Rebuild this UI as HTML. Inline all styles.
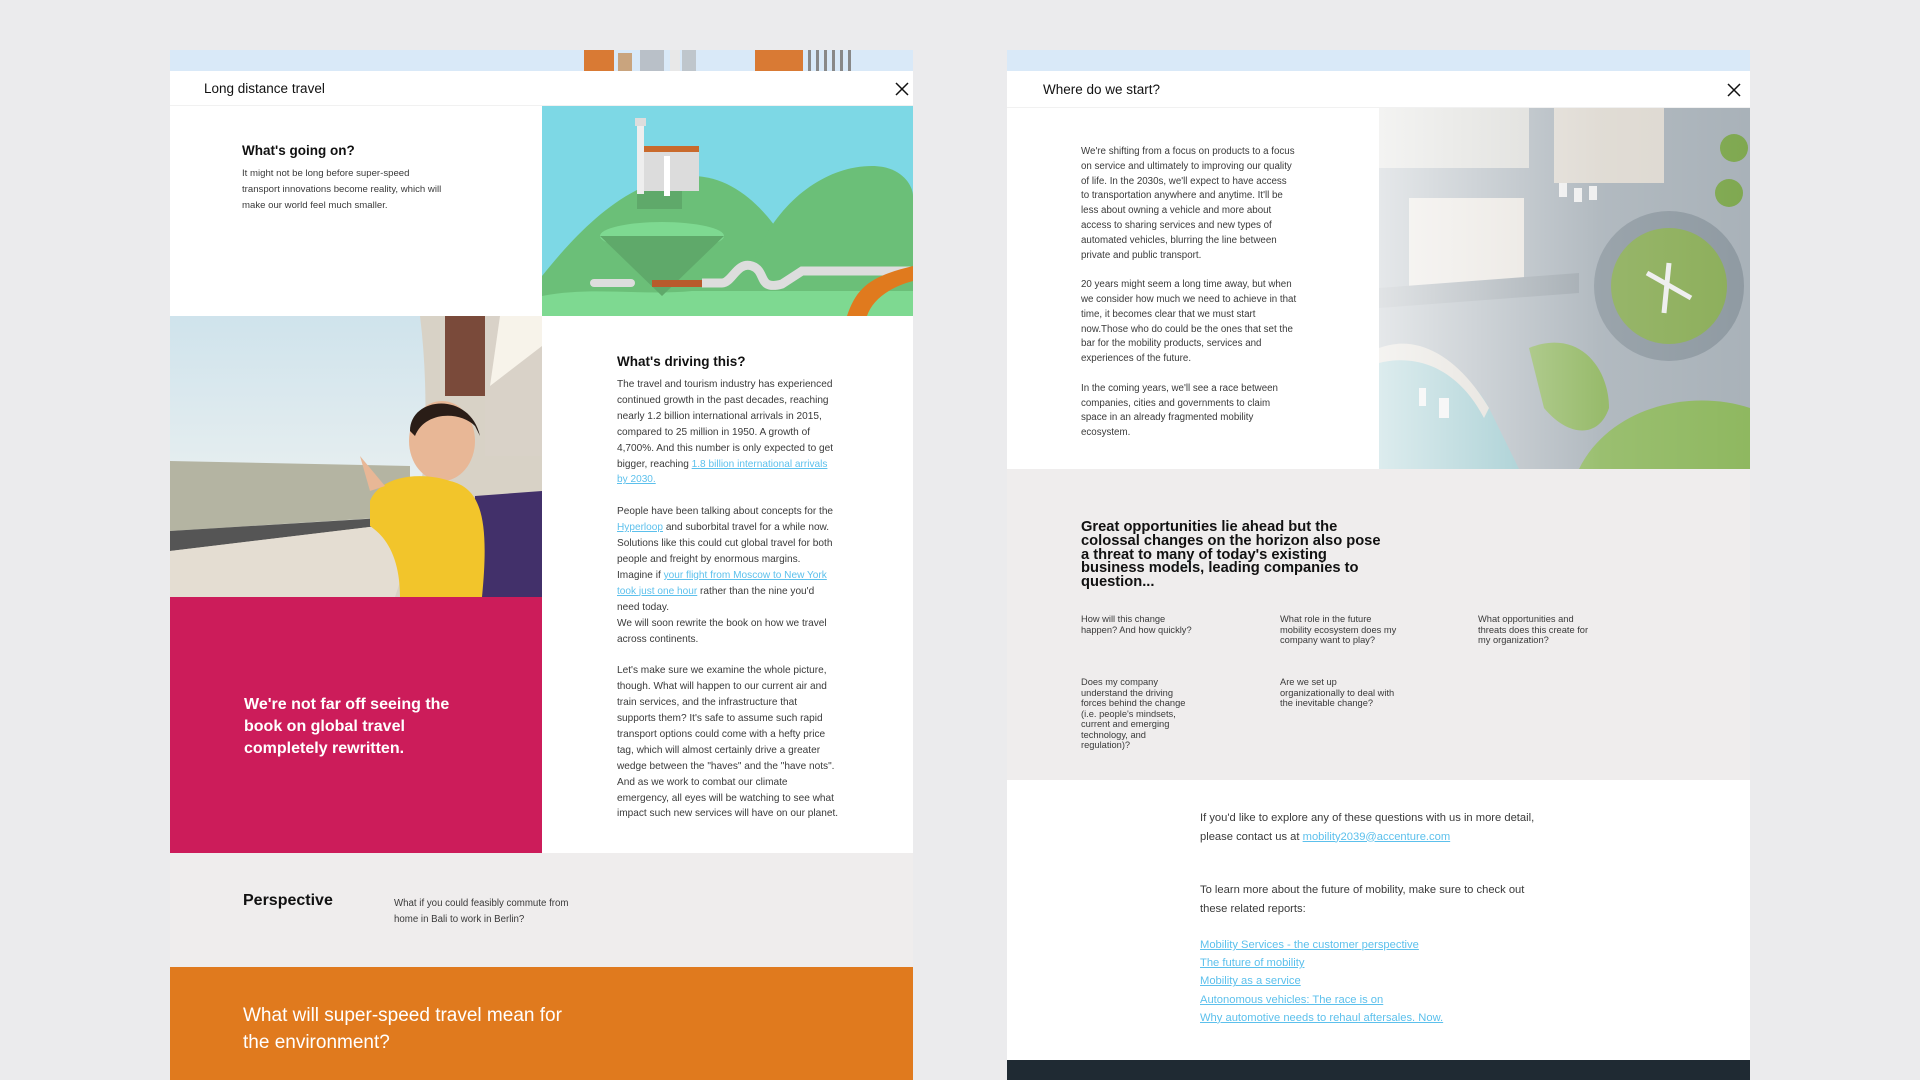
<!DOCTYPE html>
<html><head><meta charset="utf-8"><style>
*{margin:0;padding:0;box-sizing:border-box}
body{width:1920px;height:1080px;background:#ebebed;position:relative;overflow:hidden;font-family:"Liberation Sans",sans-serif;color:#333}
.a{position:absolute}
.t{font-size:10px;line-height:16px;color:#3a3a3a;white-space:nowrap}
a{color:#5cc0ec;text-decoration:underline}
</style></head><body>

<!-- LEFT PANEL -->
<div class="a" style="left:170px;top:50px;width:743px;height:21px;background:#d9e9f8"></div>
<svg class="a" style="left:570px;top:50px" width="312" height="21">
<rect x="14" y="0" width="30" height="21" fill="#d97a34"/><rect x="48" y="3" width="14" height="18" fill="#c9a47e"/>
<rect x="70" y="0" width="24" height="21" fill="#b9c0c8"/><rect x="100" y="0" width="10" height="21" fill="#e8e8e8"/>
<rect x="112" y="0" width="14" height="21" fill="#bfc6cc"/><rect x="185" y="0" width="48" height="21" fill="#d97a34"/>
<g fill="#888"><rect x="238" y="0" width="3" height="21"/><rect x="246" y="0" width="3" height="21"/><rect x="254" y="0" width="3" height="21"/><rect x="262" y="0" width="3" height="21"/><rect x="270" y="0" width="3" height="21"/><rect x="278" y="0" width="3" height="21"/></g>
</svg>
<div class="a" style="left:170px;top:71px;width:743px;height:35px;background:#fff;border-bottom:1px solid #f1f1f1"></div>
<div class="a" style="left:204px;top:81px;font-size:13.5px;color:#111">Long distance travel</div>
<svg class="a" style="left:895px;top:82px" width="14" height="14"><path d="M1 1L13 13M13 1L1 13" stroke="#111" stroke-width="1.5"/></svg>

<div class="a" style="left:170px;top:106px;width:372px;height:210px;background:#fff"></div>
<div class="a" style="left:242px;top:143px;font-size:13.5px;color:#111;font-weight:bold">What's going on?</div>
<div class="a t" style="left:242px;top:166px;font-size:9.6px;line-height:16px">It might not be long before super-speed<br>transport innovations become reality, which will<br>make our world feel much smaller.</div>

<svg class="a" style="left:542px;top:106px" width="371" height="210">
<rect width="371" height="210" fill="#7dd8e5"/>
<path d="M0 170 C40 120 90 70 150 70 C190 70 220 100 240 130 L240 210 L0 210Z" fill="#6bbf78"/>
<path d="M210 160 C230 100 280 60 330 60 C360 60 371 80 371 90 L371 210 L210 210Z" fill="#6bbf78"/>
<path d="M0 210 L0 190 C50 180 100 190 150 185 L371 185 L371 210Z" fill="#7ed991"/>
<rect x="95" y="83" width="45" height="20" fill="#5fa96a"/>
<ellipse cx="120" cy="130" rx="62" ry="14" fill="#7ed991"/>
<path d="M58 130 L120 190 L182 130Z" fill="#5fa96a"/>
<rect x="102" y="40" width="55" height="45" fill="#dcdcdc"/><rect x="102" y="40" width="55" height="6" fill="#c96a2c"/>
<rect x="95" y="18" width="7" height="70" fill="#eee"/><rect x="93" y="12" width="11" height="8" fill="#ddd"/>
<rect x="122" y="50" width="6" height="40" fill="#fff"/>
<rect x="48" y="173" width="45" height="8" rx="4" fill="#ddd"/><rect x="110" y="174" width="50" height="7" fill="#b85a2c"/>
<path d="M160 177 L180 177 C190 177 195 155 210 160 C225 165 215 185 240 178 L260 165 L371 165" stroke="#ddd" stroke-width="9" fill="none"/>
<path d="M305 210 C315 180 330 170 371 160 L371 175 C345 182 330 195 325 210Z" fill="#e07a1e"/>
</svg>

<svg class="a" style="left:170px;top:316px" width="372" height="281">
<defs><linearGradient id="sky" x1="0" y1="0" x2="0" y2="1"><stop offset="0" stop-color="#cfe3ec"/><stop offset="1" stop-color="#eef2f1"/></linearGradient></defs>
<rect width="372" height="281" fill="#d8d2c6"/>
<path d="M0 0 L250 0 C260 80 255 170 245 200 L0 215Z" fill="url(#sky)"/>
<path d="M0 145 L240 150 L240 200 L0 215Z" fill="#b4b4a2"/>
<path d="M0 215 L245 200 L250 205 L0 235Z" fill="#555"/>
<path d="M0 235 L250 205 L225 281 L0 281Z" fill="#e4ddd2"/>
<rect x="275" y="0" width="40" height="80" fill="#7a4a3a"/>
<rect x="315" y="0" width="57" height="140" fill="#d9d2c8"/>
<path d="M330 0 L372 0 L372 30 L320 70Z" fill="#f7f3ea"/>
<path d="M305 180 L372 175 L372 281 L300 281Z" fill="#42306a"/>
<ellipse cx="272" cy="125" rx="33" ry="40" fill="#e8b796"/>
<path d="M240 115 C240 80 300 75 310 120 L305 110 C290 95 255 95 245 120Z" fill="#2a1d17"/>
<path d="M200 185 C210 160 250 155 280 165 C310 172 320 200 312 281 L230 281 C230 240 215 220 200 210Z" fill="#f2c52b"/>
<path d="M190 140 L200 175 L215 170Z" fill="#e8b796"/>
</svg>

<div class="a" style="left:170px;top:597px;width:372px;height:256px;background:#cc1c5a"></div>
<div class="a" style="left:244px;top:694px;font-size:16px;line-height:22px;color:#fff;font-weight:bold;white-space:nowrap">We're not far off seeing the<br>book on global travel<br>completely rewritten.</div>

<div class="a" style="left:542px;top:316px;width:371px;height:537px;background:#fff"></div>
<div class="a" style="left:617px;top:354px;font-size:13.5px;color:#111;font-weight:bold">What's driving this?</div>
<div class="a t" style="left:617px;top:377px;font-size:10.1px;line-height:15.9px">The travel and tourism industry has experienced<br>continued growth in the past decades, reaching<br>nearly 1.2 billion international arrivals in 2015,<br>compared to 25 million in 1950. A growth of<br>4,700%. And this number is only expected to get<br>bigger, reaching <a>1.8 billion international arrivals</a><br><a>by 2030.</a><br><br>People have been talking about concepts for the<br><a>Hyperloop</a> and suborbital travel for a while now.<br>Solutions like this could cut global travel for both<br>people and freight by enormous margins.<br>Imagine if <a>your flight from Moscow to New York</a><br><a>took just one hour</a> rather than the nine you'd<br>need today.<br>We will soon rewrite the book on how we travel<br>across continents.<br><br>Let's make sure we examine the whole picture,<br>though. What will happen to our current air and<br>train services, and the infrastructure that<br>supports them? It's safe to assume such rapid<br>transport options could come with a hefty price<br>tag, which will almost certainly drive a greater<br>wedge between the "haves" and the "have nots".<br>And as we work to combat our climate<br>emergency, all eyes will be watching to see what<br>impact such new services will have on our planet.</div>

<div class="a" style="left:170px;top:853px;width:743px;height:114px;background:#efeded"></div>
<div class="a" style="left:243px;top:892px;font-size:16px;color:#111;font-weight:bold">Perspective</div>
<div class="a t" style="left:394px;top:896px;font-size:9.7px;line-height:16px">What if you could feasibly commute from<br>home in Bali to work in Berlin?</div>
<div class="a" style="left:170px;top:967px;width:743px;height:113px;background:#e07a1e"></div>
<div class="a" style="left:243px;top:1002px;font-size:19px;line-height:27px;color:#fff;white-space:nowrap">What will super-speed travel mean for<br>the environment?</div>

<!-- RIGHT PANEL -->
<div class="a" style="left:1007px;top:50px;width:743px;height:21px;background:#d9e9f8"></div>
<div class="a" style="left:1007px;top:71px;width:743px;height:37px;background:#fff;border-bottom:1px solid #f1f1f1"></div>
<div class="a" style="left:1043px;top:82px;font-size:13.5px;color:#111">Where do we start?</div>
<svg class="a" style="left:1727px;top:83px" width="14" height="14"><path d="M1 1L13 13M13 1L1 13" stroke="#111" stroke-width="1.5"/></svg>

<div class="a" style="left:1007px;top:108px;width:372px;height:361px;background:#fff"></div>
<div class="a t" style="left:1081px;top:145px;font-size:9.75px;line-height:14.8px">We're shifting from a focus on products to a focus<br>on service and ultimately to improving our quality<br>of life. In the 2030s, we'll expect to have access<br>to transportation anywhere and anytime. It'll be<br>less about owning a vehicle and more about<br>access to sharing services and new types of<br>automated vehicles, blurring the line between<br>private and public transport.<br><br>20 years might seem a long time away, but when<br>we consider how much we need to achieve in that<br>time, it becomes clear that we must start<br>now.Those who do could be the ones that set the<br>bar for the mobility products, services and<br>experiences of the future.<br><br>In the coming years, we'll see a race between<br>companies, cities and governments to claim<br>space in an already fragmented mobility<br>ecosystem.</div>

<svg class="a" style="left:1379px;top:108px" width="371" height="361">
<defs><linearGradient id="fog" x1="0" y1="0" x2="1" y2="0"><stop offset="0" stop-color="#fff" stop-opacity=".7"/><stop offset=".6" stop-color="#fff" stop-opacity=".1"/><stop offset="1" stop-color="#fff" stop-opacity="0"/></linearGradient></defs>
<rect width="371" height="361" fill="#a9b2b9"/>
<rect x="0" y="0" width="150" height="60" fill="#d8d8d4"/>
<rect x="175" y="0" width="110" height="75" fill="#ddd8d0"/>
<rect x="30" y="90" width="115" height="95" fill="#e6e2dc"/>
<path d="M0 180 L200 165 L200 185 L0 200Z" fill="#9aa3aa"/>
<path d="M0 250 C40 240 90 260 110 300 L140 361 L0 361Z" fill="#8cc0c6"/>
<path d="M0 240 C40 225 80 250 110 300 L105 310 C80 262 40 245 0 255Z" fill="#dcd8d0"/>
<circle cx="290" cy="178" r="75" fill="#8f9aa2"/>
<circle cx="290" cy="178" r="58" fill="#8cae5a"/>
<path d="M268 165 L312 190 M290 155 L285 205" stroke="#eee" stroke-width="5"/>
<path d="M150 240 C200 220 230 260 230 300 C220 330 190 330 165 300Z" fill="#8db45c"/>
<path d="M200 361 C230 300 310 280 371 300 L371 361Z" fill="#8fb860"/>
<circle cx="355" cy="40" r="14" fill="#7fa850"/><circle cx="350" cy="85" r="14" fill="#7fa850"/>
<g fill="#eee"><rect x="40" y="280" width="7" height="18"/><rect x="60" y="290" width="10" height="20"/><rect x="180" y="75" width="8" height="14"/><rect x="195" y="80" width="8" height="14"/><rect x="210" y="78" width="8" height="14"/></g>
<rect width="371" height="361" fill="url(#fog)"/>
</svg>

<div class="a" style="left:1007px;top:469px;width:743px;height:311px;background:#efeded"></div>
<div class="a" style="left:1081px;top:521px;font-size:14.7px;line-height:13.8px;color:#111;font-weight:bold;white-space:nowrap">Great opportunities lie ahead but the<br>colossal changes on the horizon also pose<br>a threat to many of today's existing<br>business models, leading companies to<br>question...</div>
<div class="a t" style="left:1081px;top:614px;font-size:9.3px;line-height:10.5px">How will this change<br>happen? And how quickly?</div>
<div class="a t" style="left:1280px;top:614px;font-size:9.3px;line-height:10.5px">What role in the future<br>mobility ecosystem does my<br>company want to play?</div>
<div class="a t" style="left:1478px;top:614px;font-size:9.3px;line-height:10.5px">What opportunities and<br>threats does this create for<br>my organization?</div>
<div class="a t" style="left:1081px;top:677px;font-size:9.3px;line-height:10.5px">Does my company<br>understand the driving<br>forces behind the change<br>(i.e. people's mindsets,<br>current and emerging<br>technology, and<br>regulation)?</div>
<div class="a t" style="left:1280px;top:677px;font-size:9.3px;line-height:10.5px">Are we set up<br>organizationally to deal with<br>the inevitable change?</div>

<div class="a" style="left:1007px;top:780px;width:743px;height:280px;background:#fff"></div>
<div class="a t" style="left:1200px;top:809px;font-size:11.2px;line-height:18.5px">If you'd like to explore any of these questions with us in more detail,<br>please contact us at <a>mobility2039@accenture.com</a></div>
<div class="a t" style="left:1200px;top:881px;font-size:11.2px;line-height:18.5px">To learn more about the future of mobility, make sure to check out<br>these related reports:</div>
<div class="a t" style="left:1200px;top:936px;font-size:11.2px;line-height:18.2px"><a>Mobility Services - the customer perspective</a><br><a>The future of mobility</a><br><a>Mobility as a service</a><br><a>Autonomous vehicles: The race is on</a><br><a>Why automotive needs to rehaul aftersales. Now.</a></div>
<div class="a" style="left:1007px;top:1060px;width:743px;height:20px;background:#1f2a33"></div>
</body></html>
